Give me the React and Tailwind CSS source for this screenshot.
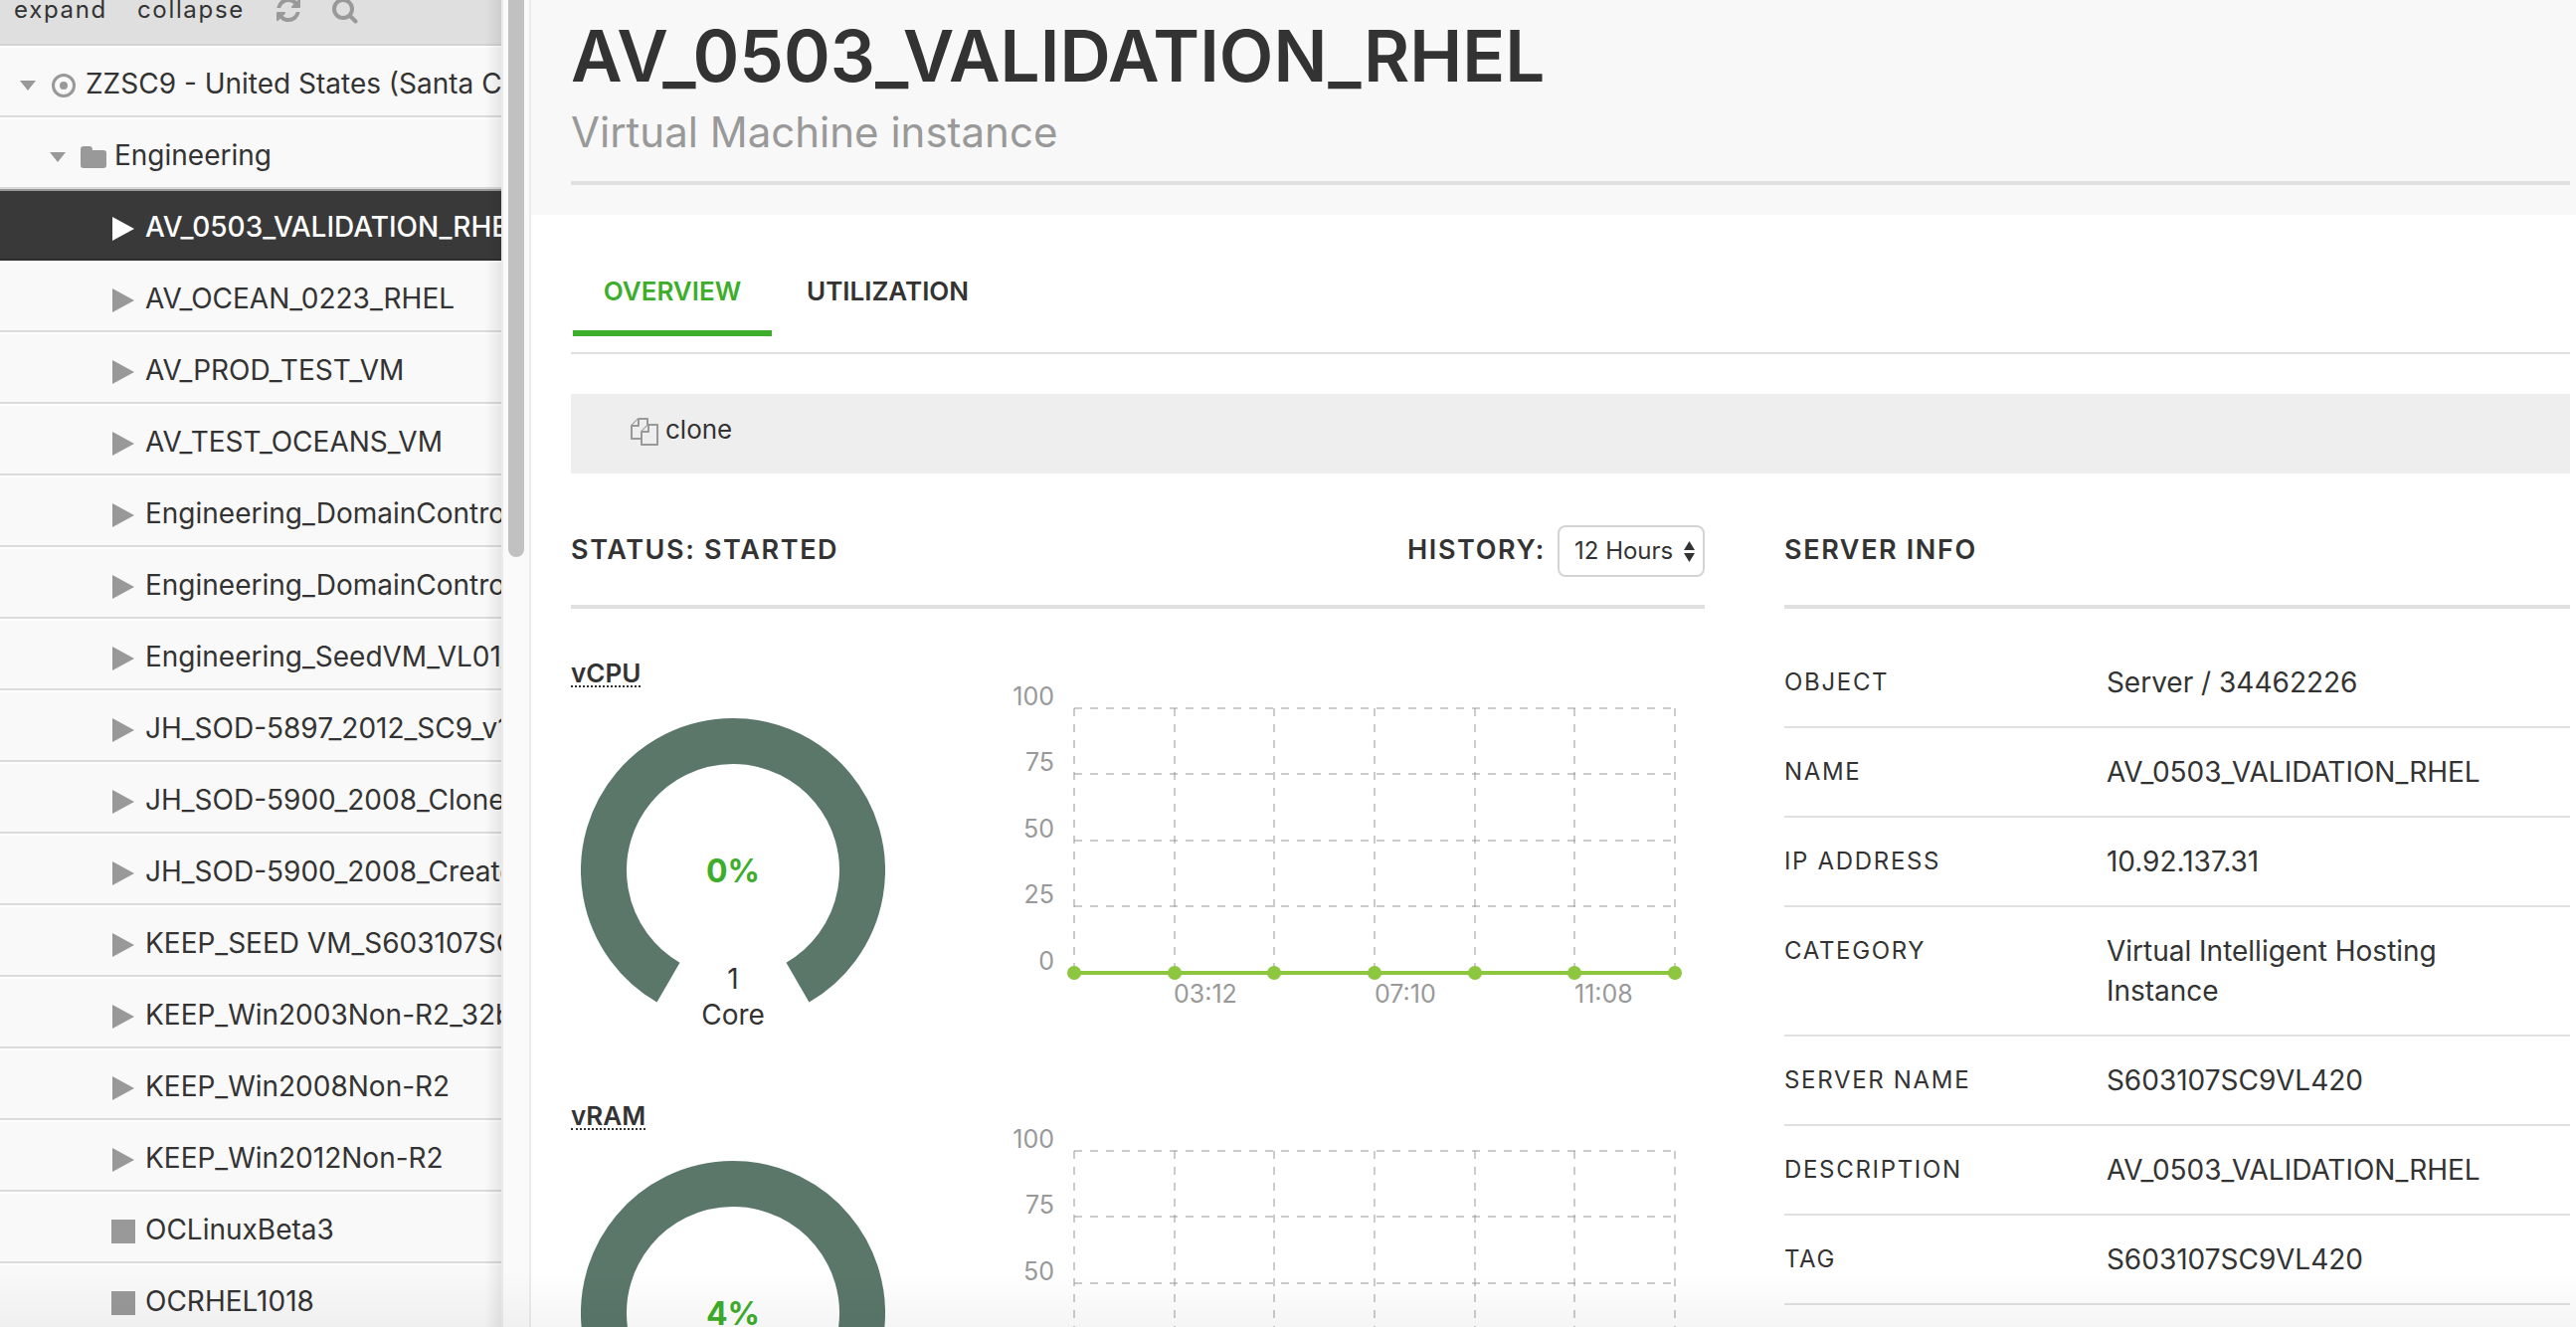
const servers = [
  ["play", "AV_0503_VALIDATION_RHEL"],
  ["play", "AV_OCEAN_0223_RHEL"],
  ["play", "AV_PROD_TEST_VM"],
  ["play", "AV_TEST_OCEANS_VM"],
  ["play", "Engineering_DomainController"],
  ["play", "Engineering_DomainController"],
  ["play", "Engineering_SeedVM_VL01_"],
  ["play", "JH_SOD-5897_2012_SC9_v1"],
  ["play", "JH_SOD-5900_2008_Clone"],
  ["play", "JH_SOD-5900_2008_Create"],
  ["play", "KEEP_SEED VM_S603107SC9"],
  ["play", "KEEP_Win2003Non-R2_32bit"],
  ["play", "KEEP_Win2008Non-R2"],
  ["play", "KEEP_Win2012Non-R2"],
  ["stop", "OCLinuxBeta3"],
  ["stop", "OCRHEL1018"],
];

const info = [
  ["OBJECT", "Server / 34462226"],
  ["NAME", "AV_0503_VALIDATION_RHEL"],
  ["IP ADDRESS", "10.92.137.31"],
  ["CATEGORY", "Virtual Intelligent Hosting Instance"],
  ["SERVER NAME", "S603107SC9VL420"],
  ["DESCRIPTION", "AV_0503_VALIDATION_RHEL"],
  ["TAG", "S603107SC9VL420"],
];

const columns = [70, 171, 271, 372, 473, 573, 674];
const rows = [32, 98, 165, 231, 298];

function Caret() {
  return (
    <svg className="mt-1 h-[10px] w-4 shrink-0 fill-[#999]" viewBox="0 0 16 10">
      <path d="M0 0H16L8 10Z" />
    </svg>
  );
}

function StateIcon({ kind }) {
  return (
    <svg className="mt-1 size-6 shrink-0 fill-current" viewBox="0 0 24 24">
      {kind === "play" ? <path d="M1 0L23 12L1 24Z" /> : <rect width="24" height="24" />}
    </svg>
  );
}

function TreeRow({ className, selected, children }) {
  return (
    <li
      className={
        (selected
          ? "border-t-[#999] border-b-[#2e2e2e] bg-[#393939] font-medium text-white "
          : "border-t-[#fefefe] border-b-[#dadada] text-[#333] ") +
        "flex h-[72px] items-center border-y-2 pt-1 text-[28px] whitespace-nowrap " +
        className
      }
    >
      {children}
    </li>
  );
}

function Sidebar() {
  return (
    <aside className="flex w-[534px] shrink-0 overflow-hidden bg-[#f9f9f9]">
      <div className="relative w-[506px] shrink-0 overflow-hidden border-r-2 border-[#ebebeb]">
        <div className="flex h-[46px] items-start gap-[30px] border-b-2 border-[#d3d3d3] bg-[#dfdfdf] pl-[14px] text-2xl leading-5 tracking-[0.07em] text-[#333]">
          <button type="button">expand</button>
          <button type="button">collapse</button>
          <button type="button" aria-label="refresh" className="-mt-0.5 ml-0.5">
            <svg className="h-6 w-6 fill-[#999]" viewBox="0 0 1536 1536">
              <path d="M1511 928q0 5-1 7-64 268-268 434.500T764 1536q-146 0-282.500-55T238 1324l-129 129q-19 19-45 19t-45-19-19-45V960q0-26 19-45t45-19h448q26 0 45 19t19 45-19 45l-137 137q71 66 161 102t187 36q134 0 250-65t186-179q11-17 53-117 8-23 30-23h192q13 0 22.500 9.500t9.500 22.500zm25-800v448q0 26-19 45t-45 19h-448q-26 0-45-19t-19-45 19-45l138-138Q969 256 768 256q-134 0-250 65T332 500q-11 17-53 117-8 23-30 23H50q-13 0-22.500-9.500T18 608v-7q65-268 270-434.500T768 0q146 0 284 55.500T1297 212l130-129q19-19 45-19t45 19 19 45z" />
            </svg>
          </button>
          <button type="button" aria-label="search" className="-mt-0.5 ml-0.5">
            <svg className="h-[26px] w-[26px] fill-none stroke-[#999]" viewBox="0 0 26 26" strokeWidth="4">
              <circle cx="11" cy="11" r="9" />
              <path d="M17.500 17.500L23.500 23.500" strokeLinecap="round" />
            </svg>
          </button>
        </div>
        <ul>
          <TreeRow className="pl-5">
            <Caret />
            <svg className="mt-1 ml-4 size-6 shrink-0" viewBox="0 0 24 24">
              <circle cx="12" cy="12" r="10.500" fill="none" stroke="#999" strokeWidth="3" />
              <circle cx="12" cy="12" r="4" fill="#999" />
            </svg>
            <span className="ml-[10px]">ZZSC9 - United States (Santa Clara)</span>
          </TreeRow>
          <TreeRow className="pl-[50px]">
            <Caret />
            <svg className="mt-1 ml-[15px] h-[22px] w-[26px] shrink-0 fill-[#999]" viewBox="0 0 26 22">
              <path d="M3 0H9Q12 0 12 4H23Q26 4 26 7V19Q26 22 23 22H3Q0 22 0 19V3Q0 0 3 0Z" />
            </svg>
            <span className="ml-2">Engineering</span>
          </TreeRow>
          {servers.map(([kind, name], i) => (
            <TreeRow key={i} selected={i === 0} className="pl-28">
              <span className={i === 0 ? "text-white" : "text-[#999]"}>
                <StateIcon kind={kind} />
              </span>
              <span className="ml-[10px]">{name}</span>
            </TreeRow>
          ))}
        </ul>
        <div className="pointer-events-none absolute inset-y-0 right-0 w-4 bg-linear-to-r from-black/0 to-black/8" />
      </div>
      <div className="flex flex-1 justify-center border-r-2 border-[#ebebeb] bg-[#fafafa]">
        <div className="h-[42%] w-4 rounded-b-full bg-[#c1c1c1]" />
      </div>
    </aside>
  );
}

function Gauge({ value, lines }) {
  return (
    <svg className="mt-[31px] ml-[10px] h-[316px] w-[306px]" viewBox="0 0 306 316">
      <path
        d="M88 265.600A130 130 0 1 1 218 265.600"
        fill="none"
        stroke="#5a776a"
        strokeWidth="46"
      />
      <text x="153" y="165" textAnchor="middle" className="fill-[#3dae2b] text-[32px] font-bold">
        {value}
      </text>
      {lines.map((line, i) => (
        <text key={line} x="153" y={272 + i * 36} textAnchor="middle" className="fill-[#333] text-[28px]">
          {line}
        </text>
      ))}
    </svg>
  );
}

function Chart() {
  return (
    <svg className="mt-[15px] min-w-0 flex-1" viewBox="0 0 704 340">
      <g stroke="#999" strokeOpacity="0.5" strokeWidth="2" strokeDasharray="8 8">
        {rows.slice(0, 4).map((y) => (
          <path key={y} d={`M70 ${y}H674`} />
        ))}
        {columns.map((x) => (
          <path key={x} d={`M${x} 32V298`} />
        ))}
      </g>
      <path d="M70 298H674" stroke="#8dc63f" strokeWidth="4" />
      {columns.map((x) => (
        <circle key={x} cx={x} cy="298" r="7" fill="#8dc63f" />
      ))}
      <g className="fill-[#999] text-[25px]">
        {rows.map((y, i) => (
          <text key={y} x="50" y={y - 3} textAnchor="end">
            {100 - i * 25}
          </text>
        ))}
        <text x="170" y="328">03:12</text>
        <text x="372" y="328">07:10</text>
        <text x="573" y="328">11:08</text>
      </g>
    </svg>
  );
}

function Metric({ label, value, lines }) {
  return (
    <div className="mb-[72px] flex items-start gap-[120px]">
      <div>
        <h3 className="w-fit border-b-2 border-dotted border-[#333] text-[26px] leading-6 font-semibold">
          {label}
        </h3>
        <Gauge value={value} lines={lines} />
      </div>
      <Chart />
    </div>
  );
}

export default function App() {
  return (
    <div className="relative flex h-screen overflow-hidden bg-white font-[Inter,sans-serif] text-[#333]">
      <Sidebar />
      <main className="min-w-0 flex-1">
        <header className="bg-[#f8f8f8] pt-3 pr-1.5 pb-[30px] pl-10">
          <div className="border-b-4 border-[#e0e0e0] pb-[21px]">
            <h1 className="text-[71px] leading-[88px] font-semibold">AV_0503_VALIDATION_RHEL</h1>
            <p className="mt-[5px] text-[42px] leading-14 text-[#999]">Virtual Machine instance</p>
          </div>
        </header>
        <div className="pr-1.5 pl-10">
          <nav className="flex gap-1 border-b-2 border-[#e0e0e0] pb-4 pl-0.5 text-[26px] leading-10 font-semibold">
            <button type="button" className="w-50 border-b-[6px] border-[#3dae2b] pt-[57px] pb-[19px] text-[#3dae2b]">
              OVERVIEW
            </button>
            <button type="button" className="border-b-[6px] border-transparent px-[31px] pt-[57px] pb-[19px]">
              UTILIZATION
            </button>
          </nav>
          <div className="mt-10 flex h-20 items-center bg-[#eee] px-[60px] pb-2">
            <button type="button" className="flex items-center gap-[7px] text-[26px] leading-7">
              <svg className="mt-1 size-7 fill-[#eee] stroke-[#999]" viewBox="0 0 28 28" strokeWidth="2" strokeLinejoin="round">
                <path d="M1 8L8 1H17V21H1Z" />
                <path d="M8 1V8H1" />
                <path d="M11 14L18 7H27V27H11Z" />
                <path d="M18 7V14H11" />
              </svg>
              clone
            </button>
          </div>
          <div className="grid grid-cols-[1.443fr_1fr] gap-20 pt-[52px]">
            <section>
              <div className="mb-[53px] flex h-[84px] items-start border-b-4 border-[#e0e0e0]">
                <h2 className="flex-1 text-[27px] leading-[50px] font-semibold tracking-[0.06em]">STATUS: STARTED</h2>
                <label htmlFor="history" className="mr-3 text-[27px] leading-[50px] font-semibold tracking-[0.06em]">
                  HISTORY:
                </label>
                <div className="relative">
                  <select
                    id="history"
                    className="h-[52px] w-[148px] appearance-none rounded-lg border-2 border-[#d4d4d4] bg-white pl-[15px] text-2xl"
                  >
                    <option>12 Hours</option>
                  </select>
                  <svg className="pointer-events-none absolute top-4 right-[10px] h-[21px] w-[11px] fill-[#333]" viewBox="0 0 11 21">
                    <path d="M5.500 0L11 9H0Z" />
                    <path d="M5.500 21L11 12H0Z" />
                  </svg>
                </div>
              </div>
              <Metric label="vCPU" value="0%" lines={["1", "Core"]} />
              <Metric label="vRAM" value="4%" lines={["2", "GB"]} />
            </section>
            <section>
              <h2 className="mb-[30px] h-[84px] border-b-4 border-[#e0e0e0] text-[27px] leading-[50px] font-semibold tracking-[0.06em]">
                SERVER INFO
              </h2>
              <table className="w-full table-fixed text-left leading-10">
                <tbody>
                  {info.map(([k, v]) => (
                    <tr key={k} className="border-b-2 border-[#e0e0e0] align-top">
                      <th scope="row" className="w-[41%] py-6 text-2xl leading-10 font-normal tracking-[0.07em]">
                        {k}
                      </th>
                      <td className="py-6 pr-16 text-[28px] leading-10">{v}</td>
                    </tr>
                  ))}
                </tbody>
              </table>
            </section>
          </div>
        </div>
      </main>
      <div className="pointer-events-none absolute inset-x-0 bottom-0 h-14 bg-linear-to-b from-black/0 to-black/4" />
    </div>
  );
}
